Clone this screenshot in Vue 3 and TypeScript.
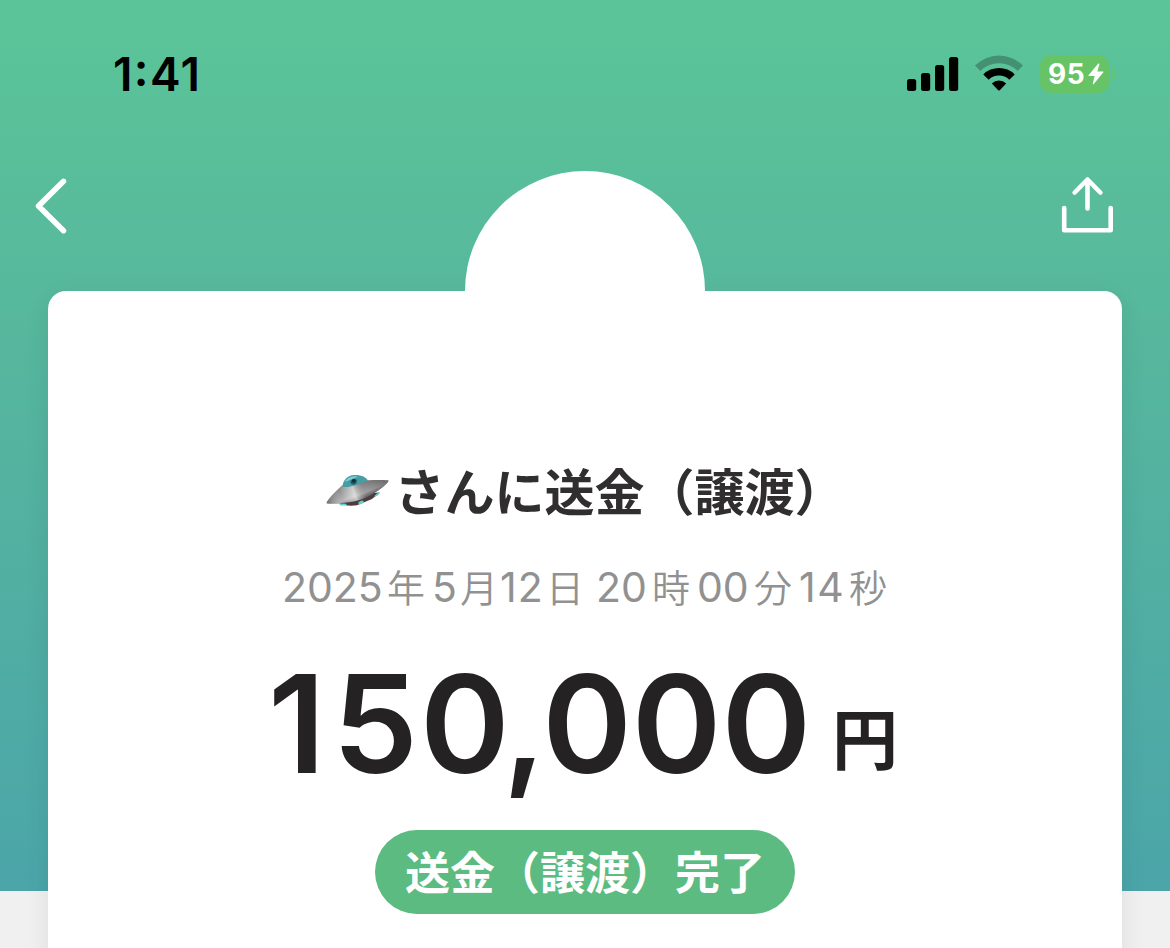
<script setup lang="ts">
interface DatePart {
  text: string
  kind: 'num' | 'unit'
  cls: string
}

const time = { hours: '1', minutes: '41' }
const battery = 95
const dateParts: DatePart[] = [
  { text: '2025', kind: 'num', cls: 'year' },
  { text: '年', kind: 'unit', cls: 'year-unit' },
  { text: '5', kind: 'num', cls: 'month' },
  { text: '月', kind: 'unit', cls: 'month-unit' },
  { text: '12', kind: 'num', cls: 'day' },
  { text: '日', kind: 'unit', cls: 'day-unit' },
  { text: '20', kind: 'num', cls: 'hour' },
  { text: '時', kind: 'unit', cls: 'hour-unit' },
  { text: '00', kind: 'num', cls: 'minute' },
  { text: '分', kind: 'unit', cls: 'minute-unit' },
  { text: '14', kind: 'num', cls: 'second' },
  { text: '秒', kind: 'unit', cls: 'second-unit' },
]
const amount = (150000).toLocaleString('en-US').split('')
</script>

<template>
  <div class="screen">
    <header class="top">
      <div class="status">
        <span class="time">{{ time.hours }}<span class="colon">:</span>{{ time.minutes }}</span>
        <div class="indicators">
          <svg class="signal" width="52" height="36" viewBox="0 0 52 36">
            <rect x="0" y="23" width="9.2" height="12" rx="2.5" />
            <rect x="14" y="17" width="9.2" height="18" rx="2.5" />
            <rect x="28" y="9" width="9.2" height="26" rx="2.5" />
            <rect x="42" y="1" width="9.2" height="34" rx="2.5" />
          </svg>
          <svg class="wifi" width="50" height="38" viewBox="0 0 50 38">
            <path d="M1 11.5A34 34 0 0 1 49 11.5L43.700 16.900A26.500 26.500 0 0 0 6.300 16.900Z" opacity=".25" />
            <path d="M9.300 20.400A22.300 22.300 0 0 1 40.700 20.400L35.300 25.800A14.700 14.700 0 0 0 14.700 25.800Z" />
            <path d="M17.800 29.500A10.300 10.300 0 0 1 32.200 29.500L26 36.100Q25 37.100 24 36.100Z" />
          </svg>
          <div class="battery">
            <span class="level">{{ battery }}</span>
            <svg width="16" height="22" viewBox="0 0 16 22">
              <path d="M10.300 0.600 0.500 12.200Q0 13 1 13H6.600L4.800 20.800Q4.800 22 5.800 21.100L15.400 9.300Q15.900 8.400 14.900 8.400H9.400L11.400 1.200Q11.400 0 10.300 .6Z" />
            </svg>
          </div>
          <i class="nub"></i>
        </div>
      </div>
      <nav class="nav">
        <svg width="34" height="60" viewBox="0 0 34 60">
          <path d="M29.500 5.300 4.500 30 29.500 54.700" stroke-width="5.500" />
        </svg>
        <svg width="54" height="60" viewBox="0 0 54 60">
          <path d="M3.200 32V54.200H49.700V32M26.500 32.500V3.800M13.700 16.500 26.500 3.500 39.300 16.500" stroke-width="4.600" />
        </svg>
      </nav>
    </header>

    <main class="card">
      <div class="avatar"></div>
      <h1 class="title">
        <svg class="ufo" width="70" height="50" viewBox="0 0 70 50">
          <defs>
            <linearGradient id="hull" gradientUnits="userSpaceOnUse" x1="26" y1="15" x2="35" y2="38">
              <stop offset="0" stop-color="#6c6a6c" />
              <stop offset="0.35" stop-color="#8e8d8f" />
              <stop offset="0.62" stop-color="#aaa9ab" />
              <stop offset="0.78" stop-color="#6b6668" />
              <stop offset="1" stop-color="#4b4648" />
            </linearGradient>
            <linearGradient id="shine" gradientUnits="userSpaceOnUse" x1="0" y1="37" x2="63" y2="15">
              <stop offset="0" stop-color="#333" stop-opacity=".5" />
              <stop offset="0.25" stop-color="#fff" stop-opacity=".15" />
              <stop offset="0.45" stop-color="#fff" stop-opacity=".6" />
              <stop offset="0.62" stop-color="#777" stop-opacity=".2" />
              <stop offset="0.85" stop-color="#333" stop-opacity=".3" />
              <stop offset="1" stop-color="#333" stop-opacity=".5" />
            </linearGradient>
          </defs>
          <path d="M12 36.500Q20 41 31 39.300L46 33 54 26.500 30 28Z" fill="#4a3c3f" />
          <g fill="#62cfcf">
            <ellipse cx="17" cy="38.500" rx="3.500" ry="1" />
            <ellipse cx="35" cy="36.500" rx="2.800" ry="1.600" transform="rotate(-20 35 36.500)" />
            <ellipse cx="51" cy="28.800" rx="3" ry="1" transform="rotate(-35 51 28.800)" />
          </g>
          <path d="M.5 37.300C1 34 9 26 16 19.500 30 13.500 52 13.500 62.500 14.300 63 17 54 24 45 29 33 36.500 8 39 .5 37.300Z" fill="url(#hull)" />
          <path d="M.5 37.300C1 34 9 26 16 19.500 30 13.500 52 13.500 62.500 14.300 63 17 54 24 45 29 33 36.500 8 39 .5 37.300Z" fill="url(#shine)" />
          <path d="M16.500 20.500C17 13.500 22 9.500 28 9 35 8.500 40 11 42 14.500 36 17 22 23 16.500 20.500Z" fill="#489da4" />
          <path d="M19 16C21 11.500 27 9.500 32 10.500 28 12 24 14 19 16Z" fill="#80cdd1" />
          <path d="M24.500 15Q28 11.500 31 14 31 17 29 18.500H26.500Q24 17.500 24.500 15Z" fill="#1c5c66" />
          <circle cx="27.700" cy="14.700" r="1.800" fill="#102f38" />
        </svg>
        <span>さんに送金（譲渡）</span>
      </h1>
      <p class="date">
        <span v-for="p in dateParts" :key="p.cls" :class="[p.kind, p.cls]">{{ p.text }}</span>
      </p>
      <p class="amount">
        <span class="value"><span v-for="(c, i) in amount" :key="i" :class="['digit', `d${i}`]">{{ c }}</span></span>
        <span class="yen">円</span>
      </p>
      <div class="badge"><span>送金（譲渡）完了</span></div>
    </main>
  </div>
</template>

<style>
body {
  margin: 0;
  overflow: hidden;
}
</style>

<style scoped>
.screen {
  box-sizing: border-box;
  width: 1170px;
  height: 948px;
  overflow: hidden;
  background: linear-gradient(180deg, #5bc598 0, #57b99c 280px, #4ba5a9 891px) 0 0 / 100% 891px no-repeat #f0f0f0;
  font-family: Inter, "Noto Sans CJK JP", sans-serif;
}
.top {
  height: 291px;
}
.status {
  display: flex;
  justify-content: space-between;
  height: 140px;
  padding: 0 55px 0 113px;
}
.time {
  margin-top: 46px;
  height: 56px;
  line-height: 56px;
  font-size: 46px;
  font-weight: 600;
  letter-spacing: 1.4px;
  color: #000;
}
.colon {
  position: relative;
  top: -5px;
}
.indicators {
  display: flex;
  align-items: flex-start;
}
.signal {
  margin: 56px 15px 0 0;
}
.wifi {
  margin: 54px 16px 0 0;
}
.battery {
  display: flex;
  box-sizing: border-box;
  align-items: center;
  width: 69px;
  height: 38px;
  margin-top: 55px;
  padding-left: 8px;
  gap: 2px;
  border-radius: 11px;
  background: #67c466;
  fill: #fff;
}
.level {
  width: 38px;
  font-size: 28px;
  line-height: 38px;
  font-weight: 700;
  letter-spacing: 0.5px;
  color: #fff;
}
.nub {
  width: 3px;
  height: 12px;
  margin: 68px 0 0 3px;
  border-radius: 0 3px 3px 0;
  background: #62c37c;
}
.nav {
  display: flex;
  justify-content: space-between;
  height: 60px;
  margin-top: 36px;
  padding: 0 55px 0 34px;
  fill: none;
  stroke: #fff;
  stroke-linecap: round;
  stroke-linejoin: round;
}
.card {
  position: relative;
  display: flex;
  flex-direction: column;
  align-items: center;
  box-sizing: border-box;
  height: 720px;
  margin: 0 48px;
  padding-top: 166px;
  border-radius: 18px;
  background: #fff;
  box-shadow: 0 8px 26px rgba(0, 0, 0, 0.08);
}
.avatar {
  position: absolute;
  top: -120px;
  left: 417px;
  width: 240px;
  height: 240px;
  border-radius: 50%;
  background: #fff;
}
.title {
  position: relative;
  display: flex;
  align-items: center;
  height: 64px;
  margin: 0;
  font-size: 50px;
  line-height: 64px;
  font-weight: 700;
  font-family: "Noto Sans CJK JP", sans-serif;
  color: #302e2f;
  white-space: nowrap;
}
.title span {
  margin-left: -1px;
}
.ufo {
  margin-top: 4px;
}
.date {
  display: flex;
  align-items: baseline;
  width: 606px;
  height: 56px;
  margin: 37px 0 0;
  line-height: 56px;
  color: #919191;
  white-space: nowrap;
}
.num {
  font-size: 41px;
  font-weight: 400;
}
.unit {
  font-family: "Noto Sans CJK JP", sans-serif;
  font-size: 38px;
  font-weight: 350;
}
.year { width: 105px; }
.year-unit { width: 45px; }
.month { width: 28px; }
.month-unit { width: 40px; }
.day { width: 46px; letter-spacing: 1px; }
.day-unit { width: 50px; }
.hour { width: 56px; }
.hour-unit { width: 45px; }
.minute { width: 57px; }
.minute-unit { width: 45px; }
.second { width: 50px; letter-spacing: 1.5px; }
.amount {
  display: flex;
  align-items: baseline;
  width: 630px;
  height: 160px;
  margin: 30px 0 0;
  line-height: 160px;
  color: #242223;
  white-space: nowrap;
}
.value {
  display: flex;
  width: 562px;
  font-size: 136px;
  font-weight: 600;
}
.d0 { margin-left: -2px; }
.d1 { margin-left: 7px; }
.d2 { margin-left: 2px; }
.d3 { margin-left: -7px; }
.d4 { margin-left: -4px; }
.yen {
  position: relative;
  top: -9px;
  font-family: "Noto Sans CJK JP", sans-serif;
  font-size: 66px;
  font-weight: 700;
}
.badge {
  box-sizing: border-box;
  width: 420px;
  height: 84px;
  margin-top: 26px;
  border-radius: 42px;
  background: #5bbb80;
  color: #fff;
  font-family: "Noto Sans CJK JP", sans-serif;
  font-size: 45px;
  font-weight: 700;
  line-height: 81px;
  text-align: center;
}
</style>
